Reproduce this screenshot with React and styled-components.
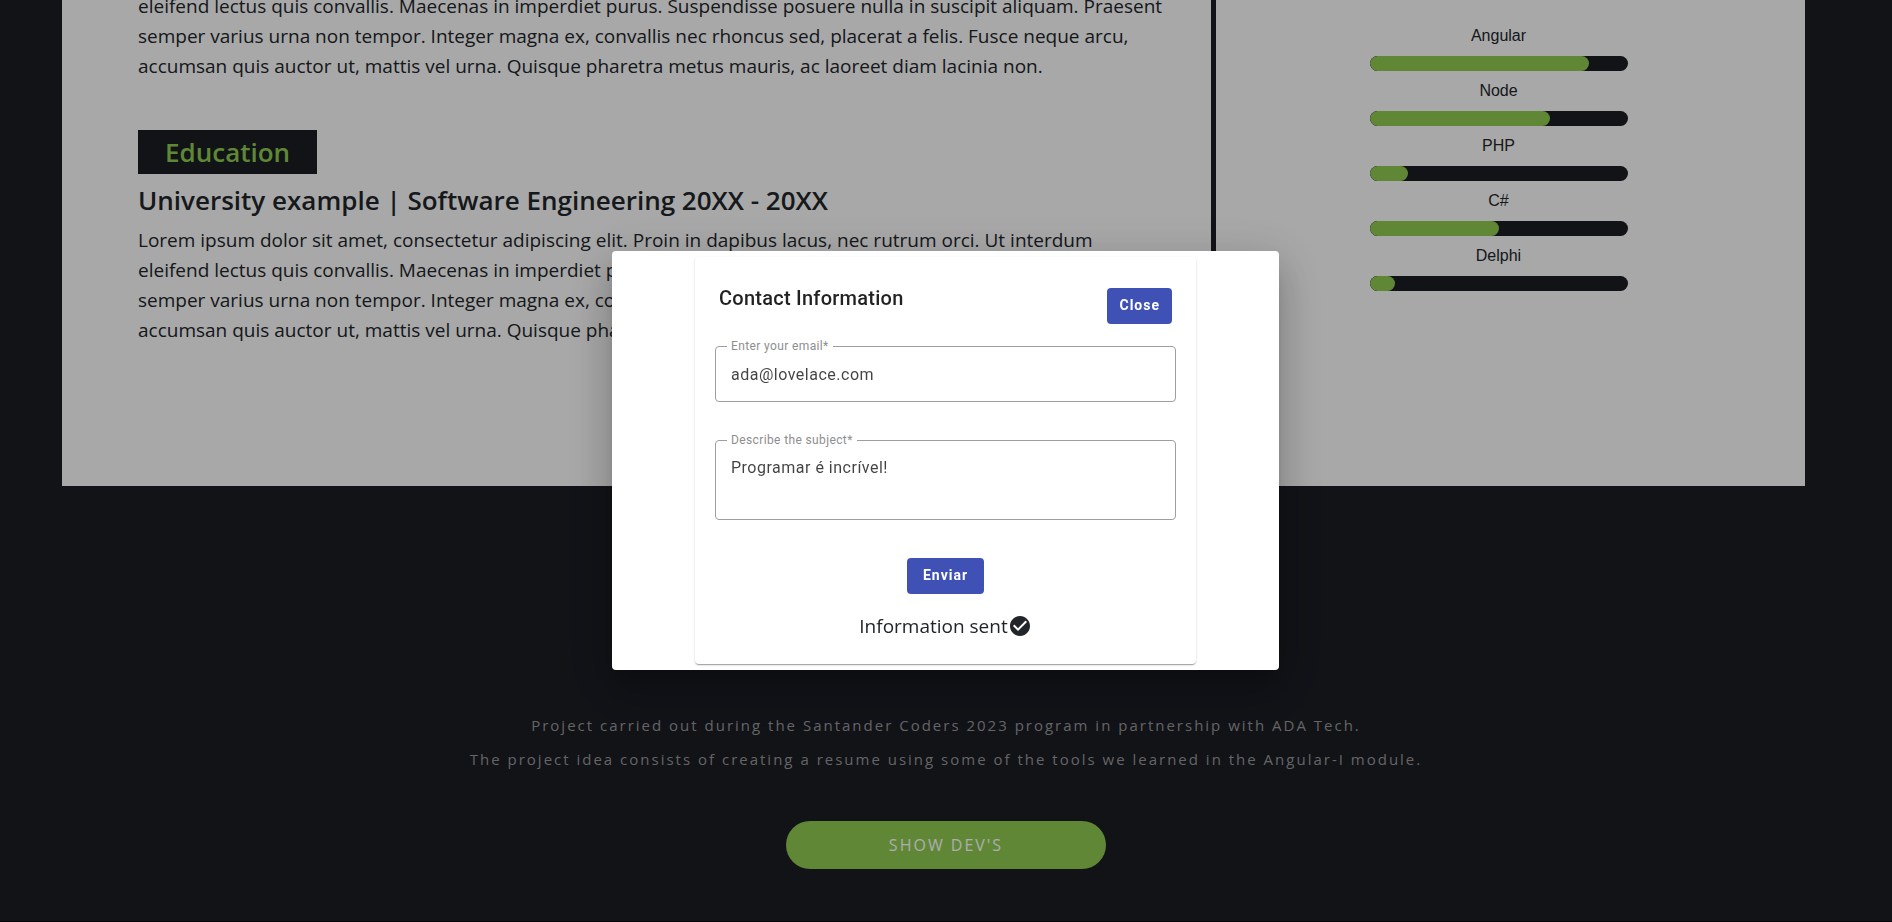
import React from "react";
import styled, { createGlobalStyle } from "styled-components";
import { MdCheckCircle } from "react-icons/md";

const dark = "#1a1c23";
const green = "#8cc850";
const sans = `"Segoe UI", "Open Sans", "Noto Sans", sans-serif`;

const GlobalStyle = createGlobalStyle`
  *, *::before, *::after { box-sizing: border-box; }
  body { margin: 0; background: ${dark}; color: #212529; font-family: ${sans}; overflow: hidden; }
  h1, h2, h3, p, ul { margin: 0; padding: 0; }
`;

const Page = styled.div`
  min-height: 100vh;
  display: flex;
  flex-direction: column;
  background: ${dark};
`;

const Sheet = styled.main`
  display: grid;
  grid-template-columns: minmax(0, 1154fr) minmax(0, 589fr);
  min-height: 486px;
  margin: 0 87px 0 62px;
  background: #f8f8f8;
`;

const History = styled.section`
  border-right: 5px solid ${dark};
  padding: 0 44px 0 76px;
  overflow: hidden;
`;

const Paragraph = styled.p`
  font-size: 19px;
  line-height: 30px;
  margin-top: ${(p) => (p.$continued ? "-9px" : "8px")};
`;

const SectionTag = styled.h2`
  width: fit-content;
  margin-top: 49px;
  padding: 5px 27px;
  background: ${dark};
  color: ${green};
  font-size: 26px;
  font-weight: 600;
  line-height: 34px;
`;

const Course = styled.h3`
  margin-top: 9px;
  font-size: 26px;
  font-weight: 600;
  line-height: 34px;
`;

const SkillColumn = styled.aside`
  display: flex;
  justify-content: center;
  padding: 24px 24px 0 0;
`;

const SkillList = styled.ul`
  width: 258px;
  list-style: none;
  display: flex;
  flex-direction: column;
  gap: 8px;
`;

const Skill = styled.li`
  display: flex;
  flex-direction: column;
  gap: 8px;
  font-family: Arial, "Liberation Sans", sans-serif;
  font-size: 16px;
  line-height: 24px;
  text-align: center;
`;

const Track = styled.div`
  height: 15px;
  border-radius: 8px;
  background: ${dark};
  overflow: hidden;
`;

const Fill = styled.div`
  height: 100%;
  border-radius: 8px;
  background: ${green};
`;

const Footer = styled.footer`
  flex: 1;
  display: flex;
  flex-direction: column;
  align-items: center;
  padding: 222px 24px 52px;
  border-bottom: 1px solid #0c0d11;
`;

const Note = styled.p`
  color: #959597;
  font-size: 15px;
  letter-spacing: 2px;
  line-height: 34px;
  text-align: center;
`;

const DevsButton = styled.button`
  width: 320px;
  height: 48px;
  margin-top: 45px;
  border: 0;
  border-radius: 24px;
  background: ${green};
  color: #fff;
  font-family: inherit;
  font-size: 16px;
  letter-spacing: 2px;
`;

const Backdrop = styled.div`
  position: fixed;
  inset: 0;
  display: flex;
  align-items: center;
  justify-content: center;
  padding: 0 1px 1px 0;
  background: rgba(0, 0, 0, 0.32);
`;

const Dialog = styled.div`
  width: 667px;
  max-width: 80vw;
  padding: 6px 83px;
  border-radius: 4px;
  background: #fff;
  box-shadow: 0 11px 15px -7px rgba(0, 0, 0, 0.2), 0 24px 38px 3px rgba(0, 0, 0, 0.14),
    0 9px 46px 8px rgba(0, 0, 0, 0.12);
`;

const Card = styled.form`
  padding: 31px 20px 23px;
  display: flex;
  flex-direction: column;
  border-radius: 4px;
  background: #fff;
  box-shadow: 0 2px 1px -1px rgba(0, 0, 0, 0.2), 0 1px 1px 0 rgba(0, 0, 0, 0.14),
    0 1px 3px 0 rgba(0, 0, 0, 0.12);
`;

const CardHeader = styled.header`
  display: flex;
  justify-content: space-between;
  align-items: flex-start;
  padding: 0 4px;
  margin-bottom: 22px;
`;

const Title = styled.h1`
  color: rgba(0, 0, 0, 0.87);
  font-family: Roboto, sans-serif;
  font-size: 20px;
  font-weight: 500;
  letter-spacing: 0.0125em;
  line-height: 20px;
`;

const ActionButton = styled.button`
  height: 36px;
  padding: 0 ${(p) => (p.$compact ? "12px" : "16px")} 2px;
  border: 0;
  border-radius: 4px;
  background: #3f51b5;
  color: #fff;
  font-family: Roboto, sans-serif;
  font-size: 14px;
  font-weight: 700;
  letter-spacing: 1px;
`;

const Field = styled.div`
  position: relative;
  display: flex;
  margin-bottom: 38px;
`;

const FieldLabel = styled.label`
  position: absolute;
  top: -8px;
  left: 12px;
  padding: 0 4px;
  background: #fff;
  color: #8e8e8e;
  font-family: Roboto, sans-serif;
  font-size: 12px;
  letter-spacing: 0.03125em;
  line-height: 16px;
`;

const TextBox = styled.input`
  flex: 1;
  min-width: 0;
  height: ${(p) => (p.$tall ? "80px" : "56px")};
  padding: ${(p) => (p.$tall ? "15px" : "0 15px")};
  border: 1px solid #9e9e9e;
  border-radius: 4px;
  background: transparent;
  color: rgba(0, 0, 0, 0.74);
  font-family: Roboto, sans-serif;
  font-size: 16px;
  letter-spacing: 0.03125em;
  line-height: 24px;
  resize: none;
`;

const Submit = styled(ActionButton)`
  align-self: center;
`;

const Status = styled.p`
  display: flex;
  align-items: center;
  justify-content: center;
  margin-top: 17px;
  font-size: 19px;
  line-height: 30px;
`;

const skills = [
  { name: "Angular", level: 85 },
  { name: "Node", level: 70 },
  { name: "PHP", level: 15 },
  { name: "C#", level: 50 },
  { name: "Delphi", level: 10 },
];

const summary =
  "eleifend lectus quis convallis. Maecenas in imperdiet purus. Suspendisse posuere nulla in suscipit aliquam. Praesent semper varius urna non tempor. Integer magna ex, convallis nec rhoncus sed, placerat a felis. Fusce neque arcu, accumsan quis auctor ut, mattis vel urna. Quisque pharetra metus mauris, ac laoreet diam lacinia non.";

export default function App() {
  return (
    <>
      <GlobalStyle />
      <Page>
        <Sheet>
          <History>
            <Paragraph $continued>{summary}</Paragraph>
            <SectionTag>Education</SectionTag>
            <Course>University example | Software Engineering 20XX - 20XX</Course>
            <Paragraph>
              Lorem ipsum dolor sit amet, consectetur adipiscing elit. Proin in dapibus lacus, nec rutrum orci. Ut
              interdum {summary}
            </Paragraph>
          </History>
          <SkillColumn>
            <SkillList>
              {skills.map(({ name, level }) => (
                <Skill key={name}>
                  <span>{name}</span>
                  <Track>
                    <Fill style={{ width: `${level}%` }} />
                  </Track>
                </Skill>
              ))}
            </SkillList>
          </SkillColumn>
        </Sheet>
        <Footer>
          <Note>Project carried out during the Santander Coders 2023 program in partnership with ADA Tech.</Note>
          <Note>
            The project idea consists of creating a resume using some of the tools we learned in the Angular-I module.
          </Note>
          <DevsButton type="button">SHOW DEV'S</DevsButton>
        </Footer>
      </Page>
      <Backdrop>
        <Dialog role="dialog" aria-modal="true" aria-labelledby="contact-title">
          <Card onSubmit={(e) => e.preventDefault()}>
            <CardHeader>
              <Title id="contact-title">Contact Information</Title>
              <ActionButton type="button" $compact>
                Close
              </ActionButton>
            </CardHeader>
            <Field>
              <TextBox id="email" type="email" defaultValue="ada@lovelace.com" />
              <FieldLabel htmlFor="email">Enter your email*</FieldLabel>
            </Field>
            <Field>
              <TextBox as="textarea" id="subject" $tall spellCheck={false} defaultValue="Programar é incrível!" />
              <FieldLabel htmlFor="subject">Describe the subject*</FieldLabel>
            </Field>
            <Submit type="submit">Enviar</Submit>
            <Status role="status">
              Information sent
              <MdCheckCircle size={24} aria-hidden="true" />
            </Status>
          </Card>
        </Dialog>
      </Backdrop>
    </>
  );
}
